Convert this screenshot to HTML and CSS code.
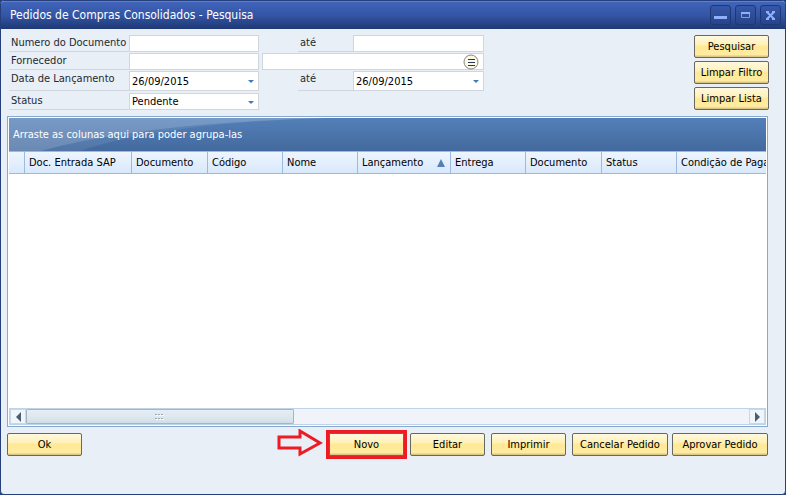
FILE: index.html
```
<!DOCTYPE html>
<html lang="pt-BR">
<head>
  <meta charset="UTF-8">
  <meta name="viewport" content="width=device-width, initial-scale=1.0">
  <title>Pedidos de Compras Consolidados - Pesquisa</title>
  <link rel="stylesheet" href="styles.css">
</head>
<body>
  <div class="window">
    <header class="titlebar">
      <h1>Pedidos de Compras Consolidados - Pesquisa</h1>
      <div class="controls">
        <button type="button" aria-label="Minimizar">
          <svg width="19" height="19" viewBox="0 0 19 19"><path d="M3 10h13v3H3z" fill="#8fb0fa"/></svg>
        </button>
        <button type="button" aria-label="Maximizar">
          <svg width="19" height="19" viewBox="0 0 19 19"><path d="M5.500 6.500h8v5h-8z" fill="none" stroke="#7f9ff0"/><path d="M5 7h9" stroke="#8fb0fa" stroke-width="2"/></svg>
        </button>
        <button type="button" aria-label="Fechar">
          <svg width="19" height="19" viewBox="0 0 19 19"><path d="M6 6l7 7M13 6l-7 7" stroke="#8fb0fa" stroke-width="2"/><path d="M5 6h3M11 6h3M5 13h3M11 13h3" stroke="#8fb0fa" stroke-width="2"/></svg>
        </button>
      </div>
    </header>

    <form class="search">
      <div class="fields">
        <label for="numero">Numero do Documento</label>
        <input type="text" id="numero">
        <label class="until" for="numero-ate">até</label>
        <input type="text" id="numero-ate">

        <label for="fornecedor">Fornecedor</label>
        <input type="text" id="fornecedor">
        <div class="box wide">
          <input type="text" aria-label="Nome do fornecedor">
          <button type="button" class="lookup" aria-label="Procurar fornecedor">
            <svg width="16" height="16" viewBox="0 0 16 16"><circle cx="8" cy="8" r="7" fill="#fbf8e6" stroke="#858782"/><path d="M5 5.500h7M5 8.500h7M5 11.500h7" stroke="#28384e"/></svg>
          </button>
        </div>

        <label for="data">Data de Lançamento</label>
        <div class="box drop">
          <input type="text" id="data" value="26/09/2015">
        </div>
        <label class="until" for="data-ate">até</label>
        <div class="box drop">
          <input type="text" id="data-ate" value="26/09/2015">
        </div>

        <label class="status" for="status">Status</label>
        <div class="box drop">
          <select id="status">
            <option>Pendente</option>
          </select>
        </div>
      </div>
      <div class="actions">
        <button type="button" class="btn">Pesquisar</button>
        <button type="button" class="btn">Limpar Filtro</button>
        <button type="button" class="btn">Limpar Lista</button>
      </div>
    </form>

    <main class="list">
      <div class="group">
        <svg class="swoosh" width="320" height="34" viewBox="0 0 320 34">
          <path d="M0 0h320Q150 5 68 34H0z" fill="#fff" opacity=".08"/>
          <path d="M0 0h320Q130 5 28 34H0z" fill="#fff" opacity=".15"/>
        </svg>
        <span>Arraste as colunas aqui para poder agrupa-las</span>
      </div>
      <div class="scroll">
        <table>
          <colgroup>
            <col class="mark"><col class="entry"><col class="doc"><col><col><col class="sorted"><col><col class="doc"><col><col class="terms">
          </colgroup>
          <thead>
            <tr>
              <th></th>
              <th>Doc. Entrada SAP</th>
              <th>Documento</th>
              <th>Código</th>
              <th>Nome</th>
              <th aria-sort="ascending"><span>Lançamento</span></th>
              <th>Entrega</th>
              <th>Documento</th>
              <th>Status</th>
              <th>Condição de Pagamento</th>
            </tr>
          </thead>
          <tbody></tbody>
        </table>
      </div>
      <div class="scrollbar">
        <button type="button" aria-label="Rolar para a esquerda">
          <svg width="7" height="10" viewBox="0 0 7 10"><path d="M6 0v10L1 5z" fill="#4a5f75"/></svg>
        </button>
        <div class="track">
          <div class="thumb">
            <svg width="9" height="8" viewBox="0 0 9 8"><path d="M0 1.500h2M3 1.500h2M6 1.500h2M0 5.500h2M3 5.500h2M6 5.500h2" stroke="#98a9ba"/><path d="M1 2.500h2M4 2.500h2M7 2.500h2M1 6.500h2M4 6.500h2M7 6.500h2" stroke="#fff"/></svg>
          </div>
        </div>
        <button type="button" aria-label="Rolar para a direita">
          <svg width="7" height="10" viewBox="0 0 7 10"><path d="M1 0v10l5-5z" fill="#4a5f75"/></svg>
        </button>
      </div>
    </main>

    <footer class="footer">
      <button type="button" class="btn">Ok</button>
      <svg class="arrow" width="46" height="28" viewBox="0 0 46 28"><path d="M2 8h21V2l20 12-20 11v-6H2z" fill="none" stroke="#ed1c24" stroke-width="3"/></svg>
      <button type="button" class="btn marked">Novo</button>
      <button type="button" class="btn">Editar</button>
      <button type="button" class="btn">Imprimir</button>
      <button type="button" class="btn large">Cancelar Pedido</button>
      <button type="button" class="btn large">Aprovar Pedido</button>
    </footer>
  </div>
</body>
</html>
```
FILE: styles.css
```
*{
  margin: 0;
  padding: 0;
  box-sizing: border-box;
}
body{
  background-color: #253f7d;
}
body, button, input, select{
  font-family: "DejaVu Sans Condensed", Tahoma, sans-serif;
  font-size: 11px;
  color: #000;
}
svg{
  display: block;
}
.window{
  display: flex;
  flex-direction: column;
  min-height: 100vh;
  border: 1px solid #253f7d;
  border-radius: 4px;
  overflow: hidden;
  background-color: #e8eff6;
}

/* barra de título */
.titlebar{
  display: flex;
  align-items: center;
  justify-content: space-between;
  height: 28px;
  padding: 0 4px 2px 9px;
  border-top: 1px solid #5f7fd0;
  background: linear-gradient(#4164bb, #3455a5 50%, #1e3873);
}
.titlebar h1{
  font-size: 12px;
  font-weight: normal;
  color: #fff;
}
.controls{
  display: flex;
  gap: 4px;
}
.controls button{
  width: 21px;
  height: 20px;
  border: 1px solid #1f3875;
  border-radius: 3px;
  background: linear-gradient(#3657a9, #26448a);
}

/* filtros */
.search{
  display: flex;
  justify-content: space-between;
  align-items: flex-start;
  padding: 6px 16px 6px 8px;
}
.fields{
  display: grid;
  grid-template-columns: 120px 130px 39px 55px 131px;
  grid-template-rows: 17px 17px 21px 17px;
  row-gap: 1px;
}
.fields label{
  grid-column: 1;
  height: 17px;
  padding-left: 2px;
  line-height: 15px;
  border-bottom: 1px solid #d0d7dc;
  color: #24292f;
}
.fields .until{
  grid-column: 4;
}
.fields label[for^="data"]{
  height: 20px;
}
.fields > input,
.box{
  height: 17px;
  min-width: 0;
  border: 1px solid #d0d7dc;
  background-color: #fff;
}
.fields input,
.fields select{
  width: 100%;
  padding: 0 2px;
  outline: none;
}
.box{
  display: flex;
  position: relative;
}
.box input,
.box select{
  height: 100%;
  border: 0;
  background: none;
  appearance: none;
}
.box.wide{
  grid-column: 3 / 6;
  margin-left: 3px;
}
.box:has(input):not(.wide){
  height: 20px;
}
.drop::after{
  content: '';
  position: absolute;
  right: 4px;
  top: 50%;
  margin-top: -1px;
  border: 3px solid transparent;
  border-top-color: #3f78bd;
  border-bottom: 0;
  pointer-events: none;
}
.lookup{
  position: absolute;
  right: 4px;
  top: 0;
  border: 0;
  background: none;
}
.actions{
  display: flex;
  flex-direction: column;
  gap: 3px;
}
.btn{
  min-width: 75px;
  height: 23px;
  border: 1px solid #686860;
  border-radius: 2px;
  background: linear-gradient(#fff9df, #fff1b8 40%, #ffe896 50%, #ffeca2 88%, #d1bd7c);
}

/* lista */
.list{
  display: flex;
  flex: 1;
  flex-direction: column;
  margin: 0 17px 0 6px;
  padding: 1px;
  border: 1px solid #87a8d1;
  background-color: #fff;
}
.group{
  display: flex;
  align-items: center;
  position: relative;
  height: 33px;
  padding-left: 4px;
  color: #fff;
  background: linear-gradient(#537fb8, #436a9e);
  overflow: hidden;
}
.group span{
  position: relative;
}
.swoosh{
  position: absolute;
  left: 0;
  top: 0;
}
.scroll{
  flex: 1;
  overflow: hidden;
}
table{
  width: 800px;
  table-layout: fixed;
  border-collapse: separate;
  border-spacing: 0;
}
col{
  width: 75px;
}
col.mark{
  width: 16px;
}
col.entry{
  width: 107px;
}
col.doc{
  width: 76px;
}
col.sorted{
  width: 93px;
}
col.terms{
  width: 134px;
}
th{
  height: 23px;
  padding-left: 4px;
  border: solid #9dbade;
  border-width: 1px 1px 1px 0;
  font-weight: normal;
  text-align: left;
  white-space: nowrap;
  background: linear-gradient(#edf5fe, #e4effd 50%, #d8e8fb);
}
th[aria-sort]{
  padding-right: 5px;
}
th[aria-sort] span{
  display: flex;
  align-items: center;
  justify-content: space-between;
}
th[aria-sort] span::after{
  content: '';
  border: 4px solid transparent;
  border-top: 0;
  border-bottom: 8px solid #5580b7;
}
.scrollbar{
  display: flex;
  height: 17px;
  border: 1px solid #bed2e8;
  background-color: #f0f4fa;
}
.scrollbar button{
  display: flex;
  align-items: center;
  justify-content: center;
  width: 16px;
  border: 1px solid #c6d8eb;
  background-color: #f0f5fa;
}
.track{
  flex: 1;
}
.thumb{
  display: flex;
  align-items: center;
  justify-content: center;
  width: 37%;
  height: 15px;
  border: 1px solid #a3b5c7;
  border-radius: 1px;
  background: linear-gradient(#e6edf4, #dfe8ef 50%, #d1dde7);
}

/* rodapé */
.footer{
  display: flex;
  gap: 6px;
  padding: 6px 17px 37px 6px;
}
.footer .large{
  min-width: 96px;
}
.footer .large + .large{
  margin-left: -2px;
}
.arrow{
  margin: -4px 0 0 auto;
}
.marked{
  border-radius: 0;
  outline: 3px solid #ed1c24;
}
```
